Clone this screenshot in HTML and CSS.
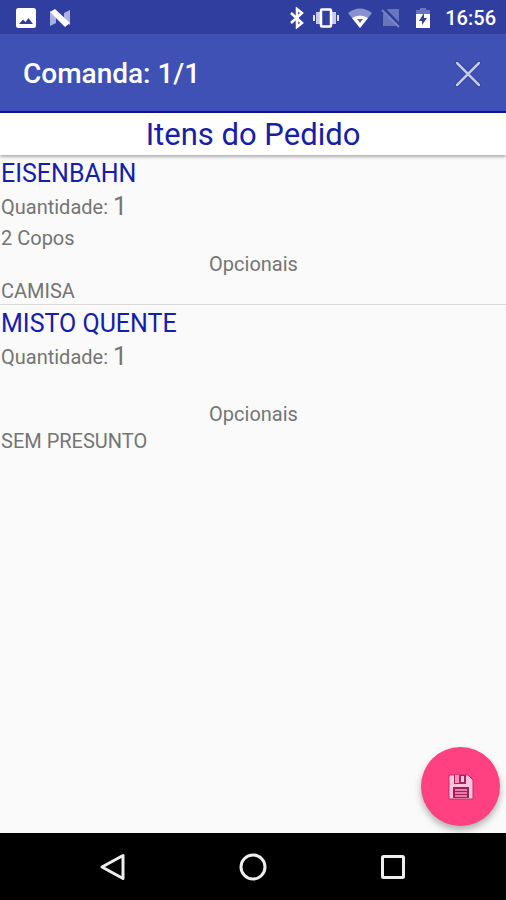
FILE: index.html
```html
<!DOCTYPE html>
<html lang="pt-BR">
<head>
<meta charset="utf-8">
<meta name="viewport" content="width=device-width, initial-scale=1">
<title>Comanda: 1/1</title>
<link rel="stylesheet" href="styles.css">
</head>
<body>
<div class="status">
  <div class="status-left">
    <svg width="20" height="20" viewBox="0 0 20 20" aria-hidden="true"><path fill="#fff" fill-rule="evenodd" d="M2.500 0h15a2.500 2.500 0 0 1 2.500 2.500v15a2.500 2.500 0 0 1-2.500 2.500h-15a2.500 2.500 0 0 1-2.500-2.500v-15a2.500 2.500 0 0 1 2.500-2.500zM3 16h14l-4.500-6-3 4-2.500-2.500z"/></svg>
    <svg width="22" height="18" viewBox="0 0 22 18" aria-hidden="true"><path fill="#a9b1e0" d="M1 2l6 4v8l-6 3zM15 4l6-3v15l-6-4z"/><path fill="#fff" d="M1 3l5-3 15 14-5 4z"/></svg>
  </div>
  <div class="status-right">
    <svg width="14" height="22" viewBox="0 0 14 22" aria-hidden="true"><path fill="none" stroke="#fff" stroke-width="2.500" d="M1 6l11 10-5 4V2l5 4L1 16"/></svg>
    <svg width="26" height="20" viewBox="0 0 26 20" aria-hidden="true"><path stroke="#c5caec" stroke-width="4" d="M5 4v12M21 4v12"/><path stroke="#e4e6f6" stroke-width="2" d="M1 7v6M25 7v6"/><rect x="8" y="1.500" width="10" height="17" rx="1" fill="#303f9f" stroke="#fff" stroke-width="2.500"/></svg>
    <svg width="24" height="20" viewBox="0 0 24 20" aria-hidden="true"><path fill="#8791cb" d="M0 5Q12-4 24 5L12 20z"/><path fill="#fff" d="M4 10q8-5 16 0l-8 10z"/><path fill="#686b70" d="M9 11h6l-3 4z"/></svg>
    <svg width="20" height="20" viewBox="0 0 20 20" aria-hidden="true"><path fill="#6975bd" d="M7 1h10a1 1 0 0 1 1 1v16H2V6z"/><path stroke="#303f9f" stroke-width="3" d="M2 0l18 18"/><path stroke="#7983c5" stroke-width="2" d="M1 2l17 17"/></svg>
    <svg class="battery" width="14" height="20" viewBox="0 0 14 20" aria-hidden="true"><path fill="#6975bd" d="M4 0h6v2h4v5H0V2h4z"/><path fill="#fff" d="M0 6h14v14H0z"/><path fill="#303f9f" d="M8 5l-5 8h3v4l5-7H8z"/></svg>
    <span class="clock">16:56</span>
  </div>
</div>
<header class="appbar">
  <h1>Comanda: 1/1</h1>
  <button class="close" type="button" aria-label="Fechar"><svg width="28" height="28" viewBox="0 0 28 28" aria-hidden="true"><path stroke="#2b3990" stroke-width="4" stroke-linecap="round" d="M3 3l22 22M25 3L3 25"/><path stroke="#c3c9ea" stroke-width="2.500" stroke-linecap="round" d="M3 3l22 22M25 3L3 25"/></svg></button>
</header>
<main>
  <h2 class="title">Itens do Pedido</h2>
  <ul class="items">
    <li class="item">
      <h3>EISENBAHN</h3>
      <p class="qty">Quantidade: <b>1</b></p>
      <p class="note">2 Copos</p>
      <h4>Opcionais</h4>
      <p class="option">CAMISA</p>
    </li>
    <li class="item">
      <h3>MISTO QUENTE</h3>
      <p class="qty">Quantidade: <b>1</b></p>
      <p class="note"></p>
      <h4>Opcionais</h4>
      <p class="option">SEM PRESUNTO</p>
    </li>
  </ul>
  <button class="fab" type="button" aria-label="Salvar"><svg width="26" height="26" viewBox="0 0 26 26" aria-hidden="true"><path fill="#ffc4dc" stroke="#b8306c" d="M1 1h19l5 5v19H1z"/><path fill="#a82561" d="M6 1h12v9H6z"/><path fill="#ff8db7" d="M7 1h4v8H7z"/><path fill="#ffc4dc" d="M13 2h3v6h-3z"/><path fill="#9d2159" d="M5 13h16v11H5z"/><path fill="#e87aaa" d="M7 15h12v2H7zM7 18h12v2H7zM7 21h12v2H7z"/></svg></button>
</main>
<nav class="navbar" aria-label="Sistema">
  <button type="button" aria-label="Voltar"><svg width="28" height="28" viewBox="0 0 28 28" aria-hidden="true"><path fill="none" stroke="#eee" stroke-width="3" stroke-linejoin="round" d="M24 2.500v23L3 14z"/></svg></button>
  <button type="button" aria-label="Início"><svg width="28" height="28" viewBox="0 0 28 28" aria-hidden="true"><circle cx="14" cy="14" r="12" fill="none" stroke="#eee" stroke-width="3"/></svg></button>
  <button type="button" aria-label="Recentes"><svg width="28" height="28" viewBox="0 0 28 28" aria-hidden="true"><rect x="3.500" y="3.500" width="21" height="21" rx="1" fill="none" stroke="#eee" stroke-width="3"/></svg></button>
</nav>
</body>
</html>
```
FILE: styles.css
```css
* {
  box-sizing: border-box;
  margin: 0;
  padding: 0;
}

body {
  display: flex;
  flex-direction: column;
  min-height: 100vh;
  background: #fafafa;
  color: #757575;
  font: 400 20px/26px Roboto, "Liberation Sans", sans-serif;
}

button {
  display: grid;
  place-items: center;
  border: 0;
  background: none;
  cursor: pointer;
}

svg {
  display: block;
}

.status,
.status-left,
.status-right,
.appbar {
  display: flex;
  align-items: center;
}

.status {
  justify-content: space-between;
  height: 34px;
  padding: 2px 10px 0 16px;
  background: #303f9f;
}

.status-left {
  gap: 13px;
}

.status-right {
  gap: 9px;
}

.battery {
  margin: 0 6px;
}

.clock {
  color: #fff;
  font-weight: 500;
}

.appbar {
  justify-content: space-between;
  height: 79px;
  padding: 3px 16px 0 23px;
  border-bottom: 2px solid #0a1496;
  background: #3f51b5;
}

.appbar h1 {
  color: #fff;
  font-size: 28px;
  line-height: 36px;
  font-weight: 500;
}

.close {
  width: 44px;
  height: 44px;
}

main {
  position: relative;
  flex: 1;
}

.title {
  padding-top: 2px;
  background: #fff;
  box-shadow: 0 2px 3px rgba(0, 0, 0, 0.3);
  color: #1620a6;
  font-size: 31px;
  line-height: 40px;
  font-weight: 400;
  text-align: center;
}

.items {
  list-style: none;
}

.item {
  padding: 3px 0 0 1px;
}

.item + .item {
  border-top: 1px solid #d8d8d8;
}

.item h3 {
  color: #1620a6;
  font-size: 25px;
  line-height: 31px;
  font-weight: 400;
}

.qty {
  display: flex;
  align-items: center;
  gap: 5px;
  height: 36px;
}

.qty b {
  font-size: 25px;
  font-weight: 400;
}

.note {
  min-height: 26px;
}

.item h4 {
  font-size: 20px;
  line-height: 27px;
  font-weight: 400;
  text-align: center;
}

.fab {
  position: absolute;
  right: 6px;
  bottom: 7px;
  width: 79px;
  height: 79px;
  border-radius: 50%;
  background: #ff4081;
  box-shadow: 0 4px 7px rgba(0, 0, 0, 0.3);
}

.navbar {
  display: flex;
  justify-content: center;
  gap: 96px;
  height: 67px;
  background: #000;
}

.navbar button {
  width: 44px;
}
```
